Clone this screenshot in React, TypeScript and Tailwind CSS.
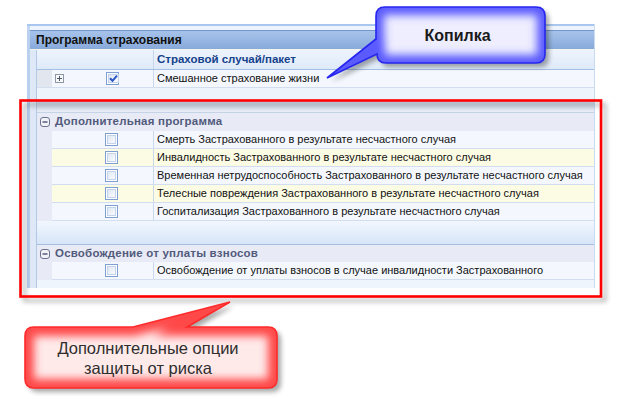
import React from "react"

const extraRisks = [
  "Смерть Застрахованного в результате несчастного случая",
  "Инвалидность Застрахованного в результате несчастного случая",
  "Временная нетрудоспособность Застрахованного в результате несчастного случая",
  "Телесные повреждения Застрахованного в результате несчастного случая",
  "Госпитализация Застрахованного в результате несчастного случая",
]

function CheckBox({ checked = false }: { checked?: boolean }) {
  return (
    <span className="flex w-[13px] h-[13px] border border-[#7d9fd3] bg-white p-[1px]">
      <span className="flex flex-1 items-center justify-center border border-[#c3d3ea] bg-linear-to-br from-[#dfe7f3] to-[#fafcff]">
        {checked && (
          <svg width="9" height="9" viewBox="0 0 9 9">
            <path d="M1 4.2 L3.5 6.8 L8 1.6" fill="none" stroke="#2a55c2" strokeWidth="2" />
          </svg>
        )}
      </span>
    </span>
  )
}

function PlusBox() {
  return (
    <svg width="9" height="9" viewBox="0 0 9 9">
      <rect x="0.5" y="0.5" width="8" height="8" fill="#f7f8fa" stroke="#8e97a6" />
      <path d="M2 4.5 H7 M4.5 2 V7" stroke="#4f5869" strokeWidth="1" />
    </svg>
  )
}

function MinusBox() {
  return (
    <svg width="10" height="10" viewBox="0 0 10 10">
      <rect x="0.5" y="0.5" width="9" height="9" rx="2.5" fill="#f1f2f8" stroke="#6b7290" />
      <path d="M2.5 5 H7.5" stroke="#4b5272" strokeWidth="1.4" />
    </svg>
  )
}

function Row({ text, yellow = false, children }: { text: string; yellow?: boolean; children?: React.ReactNode }) {
  const bg = yellow ? "bg-[#fcfbe3]" : "bg-[#f4f8fe]"
  return (
    <div className="flex h-[18px] border-b border-[#d2deef]">
      <div className={`flex w-[101px] items-center ${bg}`}>{children}</div>
      <div
        className={`flex flex-1 items-center whitespace-nowrap border-l border-[#cbd9ec] pl-[3px] text-[11px] text-[#111] ${bg}`}
      >
        {text}
      </div>
    </div>
  )
}

function GroupHeader({ title, h }: { title: string; h: string }) {
  return (
    <div className={`flex ${h} items-center gap-[5px] bg-[#e8ebf6] pl-[3px] text-[11.5px] font-bold text-[#525a7c]`}>
      <MinusBox />
      <span className="tracking-[0.2px]">{title}</span>
    </div>
  )
}

function Callouts() {
  const blue =
    "M385,7 H536 Q545,7 545,16 V54 Q545,63 536,63 H386 Q377,63 377,54 L327,78 L376,39 V16 Q376,7 385,7 Z"
  const red =
    "M34,327 H133 L230,302 L187,327 H268 Q277,327 277,336 V379 Q277,388 268,388 H34 Q25,388 25,379 V336 Q25,327 34,327 Z"
  return (
    <svg className="pointer-events-none absolute inset-0" width="617" height="399" viewBox="0 0 617 399">
      <defs>
        <filter id="shadow" x="-10%" y="-10%" width="130%" height="140%">
          <feGaussianBlur in="SourceAlpha" stdDeviation="2.5" />
          <feOffset dx="4" dy="4" />
          <feComponentTransfer>
            <feFuncA type="linear" slope="0.35" />
          </feComponentTransfer>
          <feMerge>
            <feMergeNode />
            <feMergeNode in="SourceGraphic" />
          </feMerge>
        </filter>
        <filter id="blur">
          <feGaussianBlur stdDeviation="4" />
        </filter>
        <clipPath id="clipBlue">
          <path d={blue} />
        </clipPath>
        <clipPath id="clipRed">
          <path d={red} />
        </clipPath>
      </defs>

      {/* red frame */}
      <rect x="20.5" y="100.5" width="580.5" height="196" fill="none" stroke="#ff0000" strokeWidth="2.6" filter="url(#shadow)" />

      {/* blue callout */}
      <g filter="url(#shadow)">
        <path d={blue} fill="#eeeeff" />
      </g>
      <g clipPath="url(#clipBlue)">
        <path d={blue} fill="none" stroke="#5a5aff" strokeWidth="16" filter="url(#blur)" />
      </g>
      <path d={blue} fill="none" stroke="#2626ee" strokeWidth="1.6" />

      {/* red callout */}
      <g filter="url(#shadow)">
        <path d={red} fill="#ffeaea" />
      </g>
      <g clipPath="url(#clipRed)">
        <path d={red} fill="none" stroke="#ff4a4a" strokeWidth="18" filter="url(#blur)" />
      </g>
      <path d={red} fill="none" stroke="#ff2a2a" strokeWidth="1.6" />
    </svg>
  )
}

export default function App() {
  return (
    <div className="relative h-[399px] w-[617px] overflow-hidden bg-white font-['Liberation_Sans',Arial,sans-serif]">
      <div className="pl-[27px] pt-[24px]">
        {/* Panel */}
        <div className="w-[568px] border-r border-[#c9dbf2]">
          <div className="h-[2px] bg-[#a9c7ee]" />
          <div className="h-[4px] border-l-[3px] border-[#c4d8f2] bg-[#eef4fc]" />
          <div className="flex">
            <div className="w-[3px] bg-[#b9d0ef]" />
            <div className="flex-1">
              <div className="flex h-[19px] items-center border-t border-[#7397cd] bg-linear-to-b from-[#a7c3ea] to-[#88aadb] pl-[6px] text-[12px] font-bold text-[#101010]">
                Программа страхования
              </div>
              <div className="h-[1px] bg-[#f3f4ea]" />
              <div className="flex">
                {/* left gutter */}
                <div className="w-[7px] border-r border-[#b3c8e6] bg-[#dfe8f6]" />
                <div className="flex-1">
                  {/* column header */}
                  <div className="flex h-[20px] border-b border-[#a3bfe4] bg-linear-to-b from-[#eef4fd] to-[#dfeaf9]">
                    <div className="w-[116px]" />
                    <div className="flex flex-1 items-center border-l border-[#c5d6ee] pl-[3px] text-[11.5px] font-bold text-[#15428b]">
                      Страховой случай/пакет
                    </div>
                  </div>
                  {/* main row */}
                  <div className="flex">
                    <div className="w-[15px] border-b border-[#d2deef] bg-[#e2e6ee]" />
                    <div className="flex-1">
                      <Row text="Смешанное страхование жизни">
                        <span className="ml-[3px]">
                          <PlusBox />
                        </span>
                        <span className="ml-[42px]">
                          <CheckBox checked />
                        </span>
                      </Row>
                    </div>
                  </div>
                  <div className="h-[13px] bg-[#eef4fc]" />
                  <div className="h-[12px] border-b border-[#c5d3e6] bg-linear-to-b from-[#c6d1e2] to-[#e9eef8]" />

                  {/* group 1 */}
                  <GroupHeader title="Дополнительная программа" h="h-[18px]" />
                  <div className="flex">
                    <div className="w-[15px] bg-[#e8ebf6]" />
                    <div className="flex-1">
                      {extraRisks.map((t, i) => (
                        <Row key={i} text={t} yellow={i % 2 === 1}>
                          <span className="ml-[53px]">
                            <CheckBox />
                          </span>
                        </Row>
                      ))}
                    </div>
                  </div>
                  <div className="h-[24px] border-b border-[#a6bee0] bg-linear-to-b from-[#f2f7fe] to-[#d6e5f8]" />

                  {/* group 2 */}
                  <GroupHeader title="Освобождение от уплаты взносов" h="h-[17px]" />
                  <div className="flex">
                    <div className="w-[15px] bg-[#e8ebf6]" />
                    <div className="flex-1">
                      <Row text="Освобождение от уплаты взносов в случае инвалидности Застрахованного">
                        <span className="ml-[53px]">
                          <CheckBox />
                        </span>
                      </Row>
                    </div>
                  </div>
                  <div className="h-[8px] bg-[#eff5fd]" />
                </div>
              </div>
            </div>
          </div>
        </div>
      </div>

      <Callouts />

      <div className="absolute left-[373px] top-[7px] flex h-[56px] w-[169px] items-start justify-center pt-[17px] text-[16px] font-bold text-[#1a1a1a]">
        Копилка
      </div>
      <div className="absolute left-[22px] top-[327px] flex h-[61px] w-[252px] flex-col items-center justify-center text-center text-[16.5px] leading-[20px] text-[#2e2e2e]">
        <span>Дополнительные опции</span>
        <span>защиты от риска</span>
      </div>
    </div>
  )
}
